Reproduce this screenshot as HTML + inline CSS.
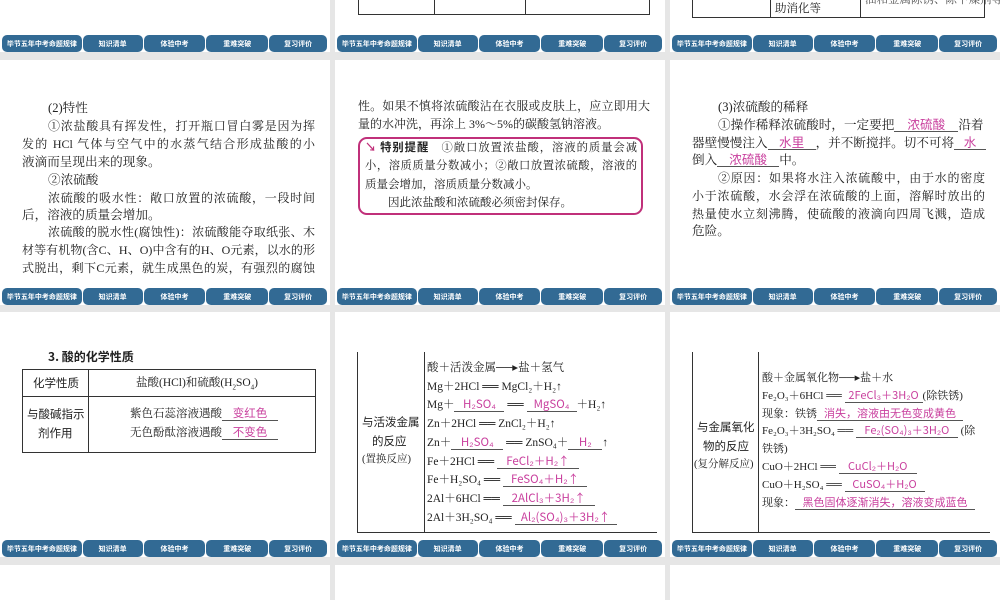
<!DOCTYPE html>
<html style="width:1000px;height:600px;overflow:hidden"><head><meta charset="utf-8"><style>
*{margin:0;padding:0;box-sizing:border-box}
body{width:1000px;height:600px;background:#e6e6e6;position:relative;overflow:hidden;font-family:"Liberation Serif","Noto Serif CJK SC",serif;color:#222}
.s{position:absolute;background:#fff;width:330px;height:245px;overflow:hidden}
.nav{position:absolute;left:2px;width:326px;height:17px;bottom:0;display:flex}
.nav div{background:#326a94;color:#fff;font:bold 7px "Noto Sans CJK SC",sans-serif;display:flex;align-items:center;justify-content:center;border-radius:5px;margin-right:1px;height:17px}
.l{position:absolute;font-size:12.6px;line-height:18px;white-space:nowrap}
.j{text-align-last:justify;text-align:justify;white-space:normal;height:18px;overflow:hidden;font-size:12px}
.p{color:#c9409e;font-family:"Noto Sans CJK SC",sans-serif;border-bottom:1px solid #555;display:inline-block;text-align:center;line-height:14px}
.k{font-family:"Noto Sans CJK SC",sans-serif;font-weight:bold}
.t{position:absolute;border:1px solid #333}
.v{position:absolute;border-left:1px solid #333}
.h{position:absolute;border-top:1px solid #333}
.sm{font-size:11.5px}
.j.sm{font-size:11.3px}
</style></head><body>
<!-- row 1 -->
<div class="s" style="left:0;top:-193px"><div class="nav"><div style="width:80px">毕节五年中考命题规律</div><div style="width:60px">知识清单</div><div style="width:62px">体验中考</div><div style="width:62px">重难突破</div><div style="width:58px">复习评价</div></div></div>
<div class="s" style="left:335px;top:-193px"><div class="nav"><div style="width:80px">毕节五年中考命题规律</div><div style="width:60px">知识清单</div><div style="width:62px">体验中考</div><div style="width:62px">重难突破</div><div style="width:58px">复习评价</div></div></div>
<div class="s" style="left:670px;top:-193px"><div class="nav"><div style="width:80px">毕节五年中考命题规律</div><div style="width:60px">知识清单</div><div style="width:62px">体验中考</div><div style="width:62px">重难突破</div><div style="width:58px">复习评价</div></div></div>
<div style="position:absolute;left:358px;top:-10px;width:292px;height:25px;border:1px solid #333;border-top:none"></div>
<div class="v" style="left:434px;top:0;height:15px"></div><div class="v" style="left:525px;top:0;height:15px"></div>
<div style="position:absolute;left:692px;top:-10px;width:293px;height:28px;border:1px solid #333;border-top:none"></div>
<div class="v" style="left:770px;top:0;height:18px"></div><div class="v" style="left:860px;top:0;height:18px"></div>
<div class="l sm" style="left:775px;top:0">助消化等</div>
<div class="l sm" style="left:865px;top:-9px;color:#555">油和金属除锈、除下燥剂等</div>

<!-- row 2 -->
<div class="s" style="left:0;top:60px"><div class="nav"><div style="width:80px">毕节五年中考命题规律</div><div style="width:60px">知识清单</div><div style="width:62px">体验中考</div><div style="width:62px">重难突破</div><div style="width:58px">复习评价</div></div></div>
<div class="s" style="left:335px;top:60px"><div class="nav"><div style="width:80px">毕节五年中考命题规律</div><div style="width:60px">知识清单</div><div style="width:62px">体验中考</div><div style="width:62px">重难突破</div><div style="width:58px">复习评价</div></div></div>
<div class="s" style="left:670px;top:60px"><div class="nav"><div style="width:80px">毕节五年中考命题规律</div><div style="width:60px">知识清单</div><div style="width:62px">体验中考</div><div style="width:62px">重难突破</div><div style="width:58px">复习评价</div></div></div>

<div class="l" style="left:48px;top:99px">(2)特性</div>
<div class="l j" style="left:48px;top:117px;width:267px">①浓盐酸具有挥发性，打开瓶口冒白雾是因为挥</div>
<div class="l j" style="left:22px;top:135px;width:293px">发的 HCl 气体与空气中的水蒸气结合形成盐酸的小</div>
<div class="l" style="left:22px;top:153px">液滴而呈现出来的现象。</div>
<div class="l" style="left:48px;top:171px">②浓硫酸</div>
<div class="l j" style="left:48px;top:189px;width:267px">浓硫酸的吸水性：敞口放置的浓硫酸，一段时间</div>
<div class="l" style="left:22px;top:206px">后，溶液的质量会增加。</div>
<div class="l j" style="left:48px;top:223px;width:267px">浓硫酸的脱水性(腐蚀性)：浓硫酸能夺取纸张、木</div>
<div class="l j" style="left:22px;top:241px;width:293px">材等有机物(含C、H、O)中含有的H、O元素，以水的形</div>
<div class="l j" style="left:22px;top:259px;width:293px">式脱出，剩下C元素，就生成黑色的炭，有强烈的腐蚀</div>

<div class="l j" style="left:358px;top:97px;width:292px">性。如果不慎将浓硫酸沾在衣服或皮肤上，应立即用大</div>
<div class="l" style="left:358px;top:115px;font-size:12px">量的水冲洗，再涂上 3%～5%的碳酸氢钠溶液。</div>
<div style="position:absolute;left:358px;top:137px;width:285px;height:78px;border:2px solid #c0307a;border-radius:9px"></div>
<div class="l j sm" style="left:365px;top:138px;width:272px"><span class="k" style="color:#c0307a">↘</span> <span class="k">特别提醒</span>　①敞口放置浓盐酸，溶液的质量会减</div>
<div class="l j sm" style="left:365px;top:157px;width:272px">小，溶质质量分数减小；②敞口放置浓硫酸，溶液的</div>
<div class="l sm" style="left:365px;top:176px">质量会增加，溶质质量分数减小。</div>
<div class="l sm" style="left:388px;top:194px">因此浓盐酸和浓硫酸必须密封保存。</div>

<div class="l" style="left:718px;top:98px">(3)浓硫酸的稀释</div>
<div class="l" style="left:718px;top:116px">①操作稀释浓硫酸时，一定要把<span class="p" style="width:64px">浓硫酸</span>沿着</div>
<div class="l" style="left:692px;top:134px">器壁慢慢注入<span class="p" style="width:48px">水里</span>，并不断搅拌。切不可将<span class="p" style="width:32px">水</span></div>
<div class="l" style="left:692px;top:151px">倒入<span class="p" style="width:62px">浓硫酸</span>中。</div>
<div class="l j" style="left:718px;top:169px;width:267px">②原因：如果将水注入浓硫酸中，由于水的密度</div>
<div class="l j" style="left:692px;top:187px;width:293px">小于浓硫酸，水会浮在浓硫酸的上面，溶解时放出的</div>
<div class="l j" style="left:692px;top:205px;width:293px">热量使水立刻沸腾，使硫酸的液滴向四周飞溅，造成</div>
<div class="l" style="left:692px;top:222px">危险。</div>

<!-- row 3 -->
<div class="s" style="left:0;top:312px"><div class="nav"><div style="width:80px">毕节五年中考命题规律</div><div style="width:60px">知识清单</div><div style="width:62px">体验中考</div><div style="width:62px">重难突破</div><div style="width:58px">复习评价</div></div></div>
<div class="s" style="left:335px;top:312px"><div class="nav"><div style="width:80px">毕节五年中考命题规律</div><div style="width:60px">知识清单</div><div style="width:62px">体验中考</div><div style="width:62px">重难突破</div><div style="width:58px">复习评价</div></div></div>
<div class="s" style="left:670px;top:312px"><div class="nav"><div style="width:80px">毕节五年中考命题规律</div><div style="width:60px">知识清单</div><div style="width:62px">体验中考</div><div style="width:62px">重难突破</div><div style="width:58px">复习评价</div></div></div>

<div class="l k" style="left:48px;top:348px;font-size:12px">3. 酸的化学性质</div>
<div class="t" style="left:22px;top:369px;width:294px;height:84px"></div>
<div class="h" style="left:22px;top:396px;width:294px"></div>
<div class="v" style="left:88px;top:369px;height:84px"></div>
<div class="l k sm" style="left:33px;top:374px;font-weight:normal">化学性质</div>
<div class="l sm" style="left:136px;top:374px">盐酸(HCl)和硫酸(H<sub style="font-size:7px">2</sub>SO<sub style="font-size:7px">4</sub>)</div>
<div class="l k sm" style="left:27px;top:405px;font-weight:normal">与酸碱指示</div>
<div class="l k sm" style="left:38px;top:424px;font-weight:normal">剂作用</div>
<div class="l sm" style="left:130px;top:405px">紫色石蕊溶液遇酸<span class="p" style="width:56px">变红色</span></div>
<div class="l sm" style="left:130px;top:424px">无色酚酞溶液遇酸<span class="p" style="width:56px">不变色</span></div>

<div style="position:absolute;left:357px;top:352px;width:300px;height:181px;border-left:1px solid #333;border-bottom:1px solid #333"></div>
<div class="v" style="left:424px;top:352px;height:181px"></div>
<div class="l k sm" style="left:362px;top:413px;font-weight:normal">与活泼金属</div>
<div class="l k sm" style="left:372px;top:432px;font-weight:normal">的反应</div>
<div class="l sm" style="left:362px;top:451px;font-size:10.5px">(置换反应)</div>
<div style="position:absolute;left:427px;top:359px;font-size:11.5px;line-height:18.7px;white-space:nowrap">
<div>酸＋活泼金属──▸盐＋氢气</div>
<div>Mg＋2HCl ══ MgCl₂＋H₂↑</div>
<div>Mg＋<span class="p" style="width:50px">H₂SO₄</span> ══ <span class="p" style="width:50px">MgSO₄</span>＋H₂↑</div>
<div>Zn＋2HCl ══ ZnCl₂＋H₂↑</div>
<div>Zn＋<span class="p" style="width:52px">H₂SO₄</span> ══ ZnSO₄＋<span class="p" style="width:34px">H₂</span>↑</div>
<div>Fe＋2HCl ══ <span class="p" style="width:82px">FeCl₂＋H₂↑</span></div>
<div>Fe＋H₂SO₄ ══ <span class="p" style="width:84px">FeSO₄＋H₂↑</span></div>
<div>2Al＋6HCl ══ <span class="p" style="width:92px">2AlCl₃＋3H₂↑</span></div>
<div>2Al＋3H₂SO₄ ══ <span class="p" style="width:102px">Al₂(SO₄)₃＋3H₂↑</span></div>
</div>

<div style="position:absolute;left:692px;top:352px;width:298px;height:181px;border-left:1px solid #333;border-bottom:1px solid #333"></div>
<div class="v" style="left:758px;top:352px;height:181px"></div>
<div class="l k sm" style="left:697px;top:418px;font-weight:normal">与金属氧化</div>
<div class="l k sm" style="left:703px;top:437px;font-weight:normal">物的反应</div>
<div class="l sm" style="left:694px;top:456px;font-size:10.5px">(复分解反应)</div>
<div style="position:absolute;left:762px;top:370px;font-size:11px;line-height:17.8px;white-space:nowrap">
<div>酸＋金属氧化物──▸盐＋水</div>
<div>Fe₂O₃＋6HCl ══ <span class="p" style="width:78px">2FeCl₃＋3H₂O</span>(除铁锈)</div>
<div>现象：铁锈<span class="p" style="width:146px">消失，溶液由无色变成黄色</span></div>
<div>Fe₂O₃＋3H₂SO₄ ══ <span class="p" style="width:102px">Fe₂(SO₄)₃＋3H₂O</span> (除</div>
<div>铁锈)</div>
<div>CuO＋2HCl ══ <span class="p" style="width:78px">CuCl₂＋H₂O</span></div>
<div>CuO＋H₂SO₄ ══ <span class="p" style="width:80px">CuSO₄＋H₂O</span></div>
<div>现象：<span class="p" style="width:180px">黑色固体逐渐消失，溶液变成蓝色</span></div>
</div>

<!-- row 4 -->
<div class="s" style="left:0;top:565px;height:35px"></div>
<div class="s" style="left:335px;top:565px;height:35px"></div>
<div class="s" style="left:670px;top:565px;height:35px"></div>
</body></html>
